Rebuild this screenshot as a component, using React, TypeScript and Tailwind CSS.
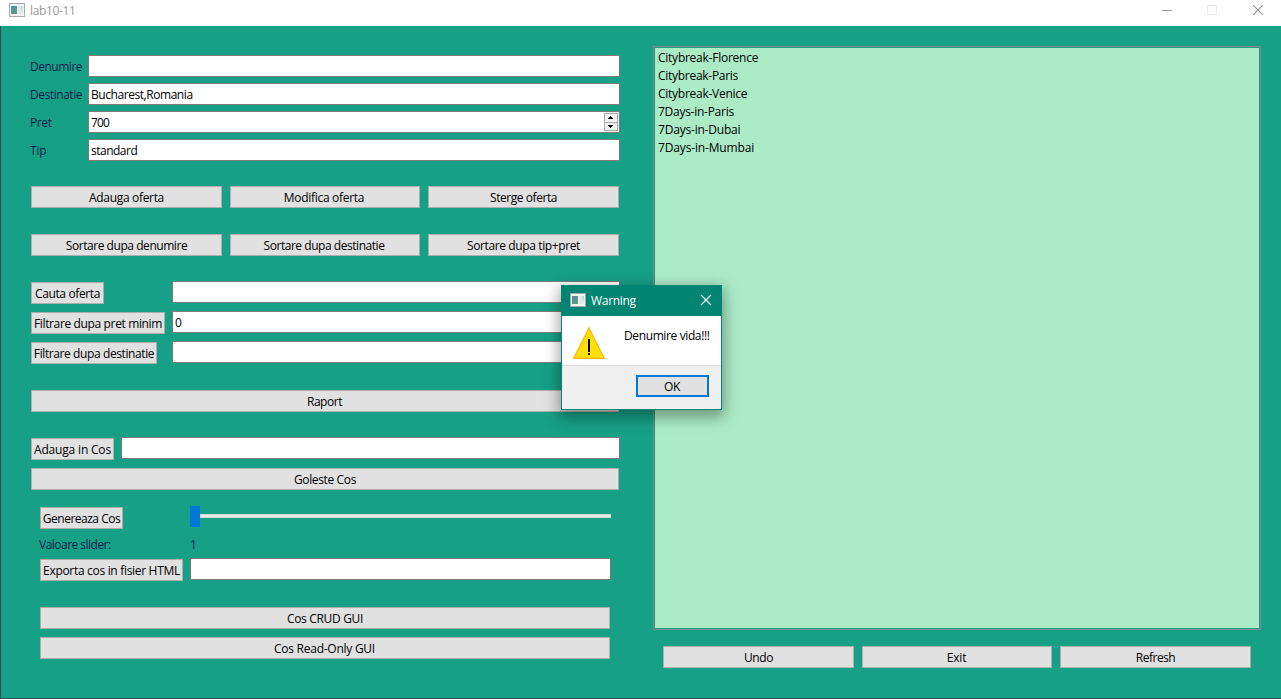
import type { ReactNode } from "react";

function Label({ children, className = "" }: { children: ReactNode; className?: string }) {
  return <span className={`whitespace-nowrap text-[#10204e] ${className}`}>{children}</span>;
}

function Btn({ children, className = "" }: { children: ReactNode; className?: string }) {
  return (
    <button
      className={`flex h-[22px] min-w-0 items-center justify-center whitespace-nowrap border border-[#adadad] bg-[#e1e1e1] pt-px text-black ${className}`}
    >
      {children}
    </button>
  );
}

function Field({ children, className = "" }: { children?: ReactNode; className?: string }) {
  return (
    <div className={`flex h-[22px] items-center whitespace-nowrap border border-[#7a7a7a] bg-white pl-[2px] text-black ${className}`}>
      {children}
    </div>
  );
}

function AppIcon({ className = "" }: { className?: string }) {
  return (
    <svg className={className} width="16" height="14" viewBox="0 0 16 14" shapeRendering="crispEdges">
      <defs>
        <linearGradient id="pane" x1="0" y1="0" x2="0.7" y2="1">
          <stop offset="0" stopColor="#5b86a8" />
          <stop offset="1" stopColor="#5aa27c" />
        </linearGradient>
        <linearGradient id="side" x1="0" y1="0" x2="0" y2="1">
          <stop offset="0" stopColor="#b5d3c8" />
          <stop offset="1" stopColor="#eef2f1" />
        </linearGradient>
      </defs>
      <rect width="16" height="14" fill="#a4a9b3" />
      <rect x="1" y="1" width="14" height="12" fill="#f3f3f5" />
      <rect x="2" y="3" width="6" height="8" fill="url(#pane)" />
      <rect x="9" y="3" width="3" height="8" fill="#e4e5e8" />
      <rect x="12" y="3" width="2" height="8" fill="url(#side)" />
    </svg>
  );
}

function Spinner() {
  return (
    <svg className="ml-auto" width="15" height="20" viewBox="0 0 15 20" shapeRendering="crispEdges">
      <rect width="15" height="20" fill="#f0f0f0" />
      <rect x="0.5" y="1.5" width="13" height="9" fill="#f0f0f0" stroke="#acacac" />
      <rect x="0.5" y="10.5" width="13" height="8" fill="#f0f0f0" stroke="#acacac" />
      <path d="M6 4h1v1h1v1h1v1H4V6h1V5h1z" fill="#000" />
      <path d="M4 13h5v1H8v1H7v1H6v-1H5v-1H4z" fill="#000" />
    </svg>
  );
}

const offers = [
  { name: "Citybreak-Florence", spacing: "tracking-[-0.25px]" },
  { name: "Citybreak-Paris", spacing: "tracking-[-0.28px]" },
  { name: "Citybreak-Venice", spacing: "tracking-[-0.26px]" },
  { name: "7Days-in-Paris", spacing: "tracking-[-0.27px]" },
  { name: "7Days-in-Dubai", spacing: "tracking-[-0.2px]" },
  { name: "7Days-in-Mumbai", spacing: "tracking-[-0.15px]" },
];

function TitleBar() {
  return (
    <header className="flex h-[26px] shrink-0 items-start bg-white pl-[9px]">
      <AppIcon className="mt-[3px]" />
      <span className="ml-[5px] mt-[2px] tracking-[-0.35px] text-[#999999]">lab10-11</span>
      <svg className="ml-auto mr-[17px] mt-[5px]" width="102" height="11" viewBox="0 0 102 11">
        <path d="M0 5.5h10" stroke="#999" />
        <rect x="45.5" y="0.5" width="9" height="9" fill="none" stroke="#e9e9e9" />
        <path d="M91.2 0.2l9.6 9.6M100.8 0.2l-9.6 9.6" stroke="#8c8c8c" strokeWidth="1.1" />
      </svg>
    </header>
  );
}

function OfferForm() {
  return (
    <section className="grid grid-cols-[58px_532px] items-center gap-y-[6px]">
      <Label className="pt-[2px] tracking-[-0.48px]">Denumire</Label>
      <Field />
      <Label className="pt-[2px] tracking-[-0.45px]">Destinatie</Label>
      <Field className="pt-[2px] tracking-[-0.44px]">Bucharest,Romania</Field>
      <Label className="pt-[2px] tracking-[-0.4px]">Pret</Label>
      <Field>
        <span className="pt-[2px] tracking-[-0.8px]">700</span>
        <Spinner />
      </Field>
      <Label className="pt-[2px] tracking-[-0.2px]">Tip</Label>
      <Field className="pt-[2px] tracking-[-0.5px]">standard</Field>
    </section>
  );
}

function CartPanel() {
  return (
    <section className="ml-[9px] mt-[16px] w-[572px]">
      <div className="flex items-start">
        <Btn className="ml-px mt-px w-[83px] tracking-[-0.5px]">Genereaza Cos</Btn>
        <div className="ml-[67px] flex h-[21px] w-[421px] items-center">
          <div className="h-[21px] w-[10px] bg-[#0078d7]" />
          <div className="-mt-px h-[4px] flex-1 border border-[#d6d6d6] bg-[#e7eaea]" />
        </div>
      </div>
      <div className="mt-[7px] flex h-[18px] items-center">
        <Label className="w-[151px] tracking-[-0.52px]">Valoare slider:</Label>
        <Label>1</Label>
      </div>
      <div className="mt-[4px] flex items-start">
        <Btn className="ml-px mt-px w-[143px] tracking-[-0.31px]">Exporta cos in fisier HTML</Btn>
        <Field className="ml-[7px] w-[421px]" />
      </div>
      <Btn className="ml-px mt-[26px] w-[570px] tracking-[-0.32px]">Cos CRUD GUI</Btn>
      <Btn className="ml-px mt-[8px] w-[570px] pr-px tracking-[-0.26px]">Cos Read-Only GUI</Btn>
    </section>
  );
}

function LeftPane() {
  return (
    <div className="w-[623px] shrink-0 pl-[29px] pt-[29px]">
      <OfferForm />
      <div className="ml-px mt-[25px] grid w-[588px] grid-cols-[191px_190px_191px] gap-x-[8px] gap-y-[26px]">
        <Btn className="tracking-[-0.32px]">Adauga oferta</Btn>
        <Btn className="pr-[2px] tracking-[-0.29px]">Modifica oferta</Btn>
        <Btn className="tracking-[-0.45px]">Sterge oferta</Btn>
        <Btn className="tracking-[-0.45px]">Sortare dupa denumire</Btn>
        <Btn className="pr-[2px] tracking-[-0.46px]">Sortare dupa destinatie</Btn>
        <Btn className="tracking-[-0.38px]">Sortare dupa tip+pret</Btn>
      </div>
      <div className="ml-px mt-[25px] grid grid-cols-[141px_448px] gap-y-[7px]">
        <Btn className="mt-px w-[73px] tracking-[-0.37px]">Cauta oferta</Btn>
        <Field />
        <Btn className="mt-px w-[134px] tracking-[-0.36px]">Filtrare dupa pret minim</Btn>
        <Field className="pt-px">0</Field>
        <Btn className="mt-px w-[126px] tracking-[-0.4px]">Filtrare dupa destinatie</Btn>
        <Field />
      </div>
      <Btn className="ml-px mt-[26px] w-[588px] pr-px tracking-[-0.45px]">Raport</Btn>
      <div className="ml-px mt-[25px] flex items-start">
        <Btn className="mt-px w-[83px] tracking-[-0.18px]">Adauga in Cos</Btn>
        <Field className="ml-[7px] w-[499px]" />
      </div>
      <Btn className="ml-px mt-[8px] w-[588px] tracking-[-0.37px]">Goleste Cos</Btn>
      <CartPanel />
    </div>
  );
}

function RightPane() {
  return (
    <div className="ml-[29px] w-[608px] pt-[20px]">
      <div className="h-[584px] border border-[#84848f] p-px">
        <ul className="h-full bg-[#abebc6] pl-[3px] pt-px">
          {offers.map((o) => (
            <li key={o.name} className={`h-[18px] leading-[18px] text-black ${o.spacing}`}>
              {o.name}
            </li>
          ))}
        </ul>
      </div>
      <div className="ml-[10px] mt-[16px] grid w-[588px] grid-cols-[191px_190px_191px] gap-x-[8px]">
        <Btn className="tracking-[-0.4px]">Undo</Btn>
        <Btn className="pr-px tracking-[-0.2px]">Exit</Btn>
        <Btn className="tracking-[-0.5px]">Refresh</Btn>
      </div>
    </div>
  );
}

function WarningDialog() {
  return (
    <div className="absolute left-[561px] top-[285px] flex h-[125px] w-[161px] flex-col border border-[#058573] bg-[#f0f0f0] shadow-[0_5px_14px_2px_rgba(0,0,0,0.36)]">
      <div className="flex h-[30px] shrink-0 items-start bg-[#008573] pl-[8px] pr-[9px] pt-[7px]">
        <AppIcon />
        <span className="ml-[5px] -mt-px tracking-[-0.3px] text-white">Warning</span>
        <svg className="ml-auto mt-px" width="12" height="12" viewBox="0 0 12 12">
          <path d="M1 1l10 10M11 1L1 11" stroke="#fff" strokeWidth="1.1" />
        </svg>
      </div>
      <div className="flex h-[49px] shrink-0 items-start bg-white pl-[10px]">
        <svg className="mt-[10px]" width="34" height="34" viewBox="0 0 34 34">
          <path d="M17 2L32.3 32.4H1.7z" fill="#ffe000" stroke="#fdb913" strokeWidth="1.3" />
          <path d="M16 13h2v13h-2zM16 27h2v2h-2z" fill="#000" shapeRendering="crispEdges" />
        </svg>
        <span className="ml-[18px] mt-[11px] whitespace-nowrap tracking-[-0.38px] text-black">Denumire vida!!!</span>
      </div>
      <div className="flex flex-1 justify-end border-t border-[#dfdfdf] pr-[12px] pt-[9px]">
        <button className="h-[22px] w-[73px] border-2 border-[#0078d7] bg-[#e1e1e1] pr-px pt-px tracking-[-0.4px] text-black">OK</button>
      </div>
    </div>
  );
}

export default function App() {
  return (
    <div className="relative flex h-[699px] w-[1281px] flex-col overflow-hidden bg-[#16a085] font-['Open_Sans',sans-serif] text-[12px] leading-[18px]">
      <TitleBar />
      <main className="flex flex-1 border-b border-l border-[#464646]">
        <LeftPane />
        <RightPane />
      </main>
      <WarningDialog />
    </div>
  );
}
